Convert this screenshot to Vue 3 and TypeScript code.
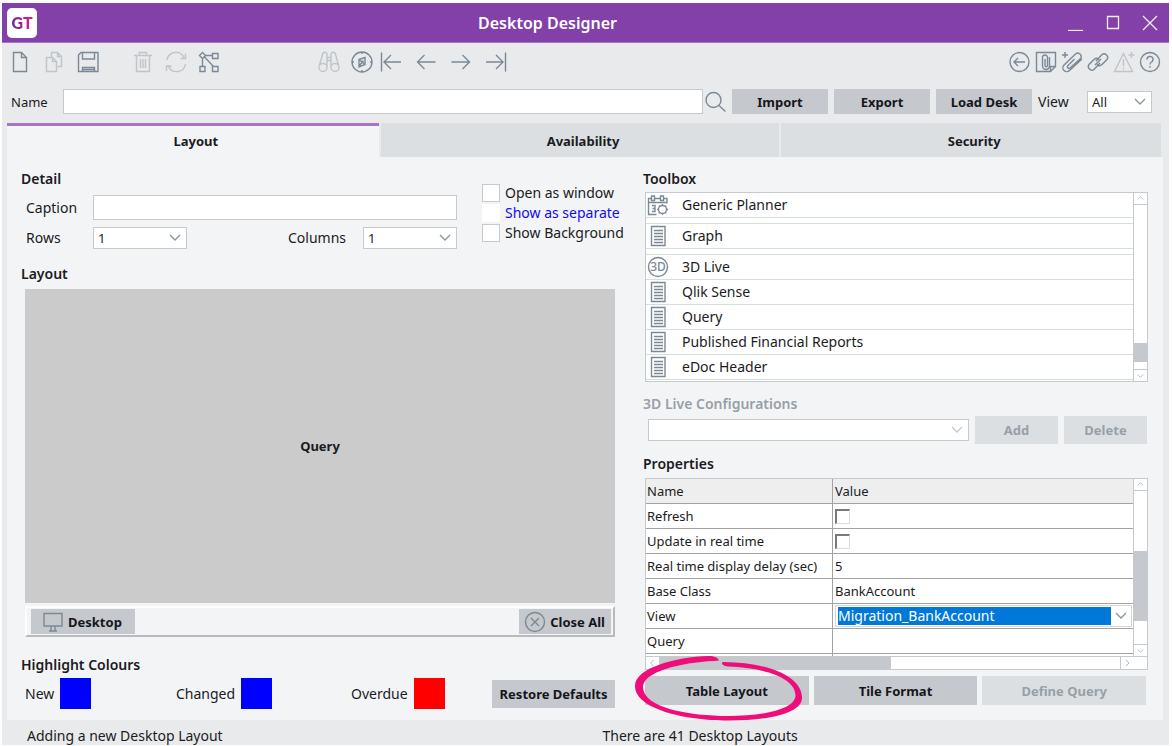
<script setup lang="ts">
import { ref } from 'vue'

interface Tool {
  label: string
  icon: string
  disabled?: boolean
}

interface ToolboxItem {
  label: string
  icon: 'planner' | 'page' | 'live'
  separated?: boolean
}

interface PropertyRow {
  name: string
  kind: 'check' | 'text' | 'select'
  value: string
}

const icons: Record<string, string> = {
  newDoc: 'M4.5 1.5h8l5 5v14h-13zM12.5 1.5v5h5',
  copy: 'M8.5 6V1.5h6l4 4v10h-4M14.5 1.5v4h4M3.5 6.5h6l4 4v10h-10zM9.5 6.5v4h4',
  save: 'M1.5 4l2.5-2.5h17v19h-19.5zM5.5 1.5v6.5h12v-6.5M5.5 20.5v-4h12v4M6 18.5h11',
  trash: 'M2 4.5h18M7.5 4.5v-3h7v3M4.5 4.5v16h13v-16M8.5 8v9M11 8v9M13.5 8v9',
  refresh: 'M2 9a9 9 0 0 1 17-2.5M20.5 2.5v5h-5M20.5 13a9 9 0 0 1-17 2.5M1.5 20v-5h5',
  tree: 'M4.5 1.5l3 3l-3 3l-3-3zM7.5 4.5h7M14.5 2.5h5.5v5h-5.5zM4.5 7.5v8M2 15.5h5v5h-5zM14.5 15.5h5.5v5h-5.5zM6.5 6l9 9.5',
  binoculars: 'M9 3.5c0-3-4-3-4.5 0L1.2 15M13 3.5c0-3 4-3 4.5 0L20.8 15M9 3v13M13 3v13M9 6.5h4M9 9.5h4M9 16.5a4 4 0 1 1-8 0a4 4 0 1 1 8 0M21 16.5a4 4 0 1 1-8 0a4 4 0 1 1 8 0',
  compass: 'M21 11a10 10 0 1 1-20 0a10 10 0 1 1 20 0M8 8.5l6-2v7l-6 2.5zM8 8.5l6 5M8.5 14.5l4-5M11 1v2M11 19v2M1 11h2M19 11h2',
  first: 'M1.5 1.5v19M21 11h-17M11 4l-7 7l7 7',
  prev: 'M20.5 11h-18M9.5 4l-7 7l7 7',
  next: 'M1.5 11h18M12.5 4l7 7l-7 7',
  last: 'M20.5 1.5v19M1 11h17M11 4l7 7l-7 7',
  back: 'M20 11a9.5 9.5 0 1 1-19 0a9.5 9.5 0 1 1 19 0M16 11h-11M9 7l-4 4l4 4',
  clipPage: 'M20.5 15.5v-14h-19v19h14zM20.5 15.5h-5v5M10 8v6.5a1.2 1.2 0 0 0 2.5 0v-8a2.5 2.5 0 0 0-5 0v8.5a3.5 3.5 0 0 0 7 0v-9',
  addClip: 'M4 1v6M1 4h6M13.5 8l-6.5 6.5a1.5 1.5 0 0 0 2 2.5L19 8a3.2 3.2 0 0 0-4.5-5L3 14a3.8 3.8 0 0 0 5.5 5.5L21 8',
  link: 'M9 10l6-6.5a3.6 3.6 0 0 1 5 5l-5 5a3.6 3.6 0 0 1-5 0M13 12l-6 6.5a3.6 3.6 0 0 1-5-5l5-5a3.6 3.6 0 0 1 5 0M8 14l6-6',
  alert: 'M10.5 2.5l9 18h-18zM10.5 8v7M10.5 16.5v2M18.5 1v6M15.5 4h6',
  help: 'M20.5 11a9.5 9.5 0 1 1-19 0a9.5 9.5 0 1 1 19 0M8 8.5a3 3 0 1 1 4.5 2.5c-1 .6-1.5 1-1.5 2.5M11 15v1.8',
  search: 'M16 9a7.5 7.5 0 1 1-15 0a7.5 7.5 0 1 1 15 0M14 14.5l6.5 6',
  planner: 'M1.5 9V4.5h3M7.5 4.5h6M16.5 4.5h3.5v5M4.5 2h3v4.5h-3zM13.5 2h3v4.5h-3zM1.5 8.5h18.5M1.5 8.5v12h8M5 11.5h3v6h-3M5.5 14.5h2.5M19.5 15.5a4 4 0 1 1-8 0a4 4 0 1 1 8 0M15.5 11.5v-1.5M15.5 19.5v1.5M11.5 15.5h-1.5M19.5 15.5h1.5M12.7 12.7l-1-1M18.3 12.7l1-1M12.7 18.3l-1 1M18.3 18.3l1 1',
  page: 'M4.5 1.5h13.5v19h-13.5zM7 5.5h9M7 8.5h9M7 11.5h9M7 14.5h9M7 17.5h9',
  desktop: 'M2 2.5h18v12.5h-18zM9 15v5M13 15v5M7 20h8',
  close: 'M20.5 11a9.5 9.5 0 1 1-19 0a9.5 9.5 0 1 1 19 0M7 7l8 8M15 7l-8 8',
}

const toolGroups: { name: string; tools: Tool[] }[] = [
  {
    name: 'file',
    tools: [
      { label: 'New', icon: 'newDoc' },
      { label: 'Copy', icon: 'copy', disabled: true },
      { label: 'Save', icon: 'save' },
    ],
  },
  {
    name: 'edit',
    tools: [
      { label: 'Delete', icon: 'trash', disabled: true },
      { label: 'Refresh', icon: 'refresh', disabled: true },
      { label: 'Structure', icon: 'tree' },
    ],
  },
  {
    name: 'find',
    tools: [
      { label: 'Find', icon: 'binoculars', disabled: true },
      { label: 'Navigate', icon: 'compass' },
    ],
  },
  {
    name: 'move',
    tools: [
      { label: 'First', icon: 'first' },
      { label: 'Previous', icon: 'prev' },
      { label: 'Next', icon: 'next' },
      { label: 'Last', icon: 'last' },
    ],
  },
  {
    name: 'extra',
    tools: [
      { label: 'Back', icon: 'back' },
      { label: 'Attachments', icon: 'clipPage' },
      { label: 'Add attachment', icon: 'addClip' },
      { label: 'Link', icon: 'link' },
      { label: 'Add alert', icon: 'alert', disabled: true },
      { label: 'Help', icon: 'help' },
    ],
  },
]

const tabs = ['Layout', 'Availability', 'Security']
const activeTab = ref('Layout')

const toolbox: ToolboxItem[] = [
  { label: 'Generic Planner', icon: 'planner' },
  { label: 'Graph', icon: 'page', separated: true },
  { label: '3D Live', icon: 'live', separated: true },
  { label: 'Qlik Sense', icon: 'page' },
  { label: 'Query', icon: 'page' },
  { label: 'Published Financial Reports', icon: 'page' },
  { label: 'eDoc Header', icon: 'page' },
]

const properties: PropertyRow[] = [
  { name: 'Refresh', kind: 'check', value: '' },
  { name: 'Update in real time', kind: 'check', value: '' },
  { name: 'Real time display delay (sec)', kind: 'text', value: '5' },
  { name: 'Base Class', kind: 'text', value: 'BankAccount' },
  { name: 'View', kind: 'select', value: 'Migration_BankAccount' },
  { name: 'Query', kind: 'text', value: '' },
]

const highlights = [
  { label: 'New', tone: 'blue' },
  { label: 'Changed', tone: 'blue' },
  { label: 'Overdue', tone: 'red' },
]
</script>

<template>
  <div class="window">
    <header class="titlebar">
      <span class="logo"><span class="logo-text">GT</span></span>
      <h1>Desktop Designer</h1>
      <div class="window-controls">
        <button type="button" aria-label="Minimise">
          <svg viewBox="0 0 16 16"><path d="M0 15.5h15" /></svg>
        </button>
        <button type="button" aria-label="Maximise">
          <svg viewBox="0 0 16 16"><path d="M2.5 1.5h11v12h-11z" /></svg>
        </button>
        <button type="button" aria-label="Close">
          <svg viewBox="0 0 16 16"><path d="M1 1l14 14M15 1l-14 14" /></svg>
        </button>
      </div>
    </header>

    <nav class="toolbar" aria-label="Tools">
      <div v-for="group in toolGroups" :key="group.name" class="tools" :class="group.name">
        <button
          v-for="tool in group.tools"
          :key="tool.label"
          type="button"
          :aria-label="tool.label"
          :disabled="tool.disabled"
        >
          <svg viewBox="0 0 22 22" class="icon"><path :d="icons[tool.icon]" /></svg>
        </button>
      </div>
    </nav>

    <div class="name-row">
      <label for="name">Name</label>
      <input id="name" type="text" class="box" />
      <button type="button" class="search" aria-label="Search">
        <svg viewBox="0 0 22 22" class="icon"><path :d="icons.search" /></svg>
      </button>
      <button type="button" class="btn">Import</button>
      <button type="button" class="btn">Export</button>
      <button type="button" class="btn">Load Desk</button>
      <label for="view-filter" class="view-label">View</label>
      <span class="combo">
        <select id="view-filter"><option>All</option></select>
        <svg viewBox="0 0 12 8" class="chevron"><path d="M1 1l5 5l5-5" /></svg>
      </span>
    </div>

    <div class="tabs" role="tablist">
      <button
        v-for="tab in tabs"
        :key="tab"
        type="button"
        role="tab"
        :aria-selected="activeTab === tab"
        :class="{ active: activeTab === tab }"
        @click="activeTab = tab"
      >
        {{ tab }}
      </button>
    </div>

    <main class="panel">
      <section class="left">
        <div class="detail">
          <div class="fields">
            <h2>Detail</h2>
            <div class="field-row">
              <label for="caption">Caption</label>
              <input id="caption" type="text" class="box" />
            </div>
            <div class="field-row second">
              <label for="rows">Rows</label>
              <span class="combo">
                <select id="rows"><option>1</option></select>
                <svg viewBox="0 0 12 8" class="chevron"><path d="M1 1l5 5l5-5" /></svg>
              </span>
              <label for="columns" class="columns-label">Columns</label>
              <span class="combo">
                <select id="columns"><option>1</option></select>
                <svg viewBox="0 0 12 8" class="chevron"><path d="M1 1l5 5l5-5" /></svg>
              </span>
            </div>
          </div>
          <div class="checks">
            <label><input type="checkbox" />Open as window</label>
            <label class="linked"><input type="checkbox" />Show as separate</label>
            <label><input type="checkbox" />Show Background</label>
          </div>
        </div>

        <h2 class="layout-title">Layout</h2>
        <div class="canvas">Query</div>
        <div class="canvas-bar">
          <button type="button" class="btn">
            <svg viewBox="0 0 22 22" class="icon"><path :d="icons.desktop" /></svg>Desktop
          </button>
          <button type="button" class="btn tight">
            <svg viewBox="0 0 22 22" class="icon"><path :d="icons.close" /></svg>Close All
          </button>
        </div>

        <h2 class="highlight-title">Highlight Colours</h2>
        <div class="highlights">
          <div v-for="item in highlights" :key="item.label" class="highlight">
            <span>{{ item.label }}</span>
            <button type="button" class="swatch" :class="item.tone" :aria-label="item.label + ' colour'"></button>
          </div>
          <button type="button" class="btn restore">Restore Defaults</button>
        </div>
      </section>

      <section class="right">
        <h2>Toolbox</h2>
        <div class="toolbox">
          <ul>
            <li v-for="item in toolbox" :key="item.label" :class="{ separated: item.separated }">
              <svg viewBox="0 0 22 22" class="icon">
                <template v-if="item.icon === 'live'">
                  <circle cx="11" cy="11" r="9.5" />
                  <text x="11" y="15" text-anchor="middle">3D</text>
                </template>
                <path v-else :d="icons[item.icon]" />
              </svg>
              {{ item.label }}
            </li>
          </ul>
          <div class="scroll-y toolbox-scroll">
            <svg viewBox="0 0 12 12" class="up"><path d="M3 7l3-3l3 3" /></svg>
            <span class="thumb"></span>
            <svg viewBox="0 0 12 12" class="down"><path d="M3 5l3 3l3-3" /></svg>
          </div>
        </div>

        <h2 class="muted config-title"><label for="config">3D Live Configurations</label></h2>
        <div class="config-row">
          <span class="combo">
            <select id="config" disabled><option></option></select>
            <svg viewBox="0 0 12 8" class="chevron"><path d="M1 1l5 5l5-5" /></svg>
          </span>
          <button type="button" class="btn" disabled>Add</button>
          <button type="button" class="btn" disabled>Delete</button>
        </div>

        <h2 class="properties-title">Properties</h2>
        <div class="properties">
          <table>
            <thead>
              <tr><th>Name</th><th>Value</th></tr>
            </thead>
            <tbody>
              <tr v-for="row in properties" :key="row.name">
                <td>{{ row.name }}</td>
                <td v-if="row.kind === 'check'">
                  <input type="checkbox" class="sunken" :aria-label="row.name" />
                </td>
                <td v-else-if="row.kind === 'select'">
                  <span class="cell-combo">
                    <select :aria-label="row.name"><option>{{ row.value }}</option></select>
                    <svg viewBox="0 0 12 8" class="chevron"><path d="M1 1l5 5l5-5" /></svg>
                  </span>
                </td>
                <td v-else>{{ row.value }}</td>
              </tr>
              <tr class="clipped"><td></td><td></td></tr>
            </tbody>
          </table>
          <div class="scroll-y properties-scroll">
            <svg viewBox="0 0 12 12" class="up"><path d="M3 7l3-3l3 3" /></svg>
            <span class="thumb"></span>
            <svg viewBox="0 0 12 12" class="down"><path d="M3 5l3 3l3-3" /></svg>
          </div>
          <div class="scroll-x">
            <svg viewBox="0 0 12 12"><path d="M7 3l-3 3l3 3" /></svg>
            <span class="thumb"></span>
            <svg viewBox="0 0 12 12" class="end"><path d="M5 3l3 3l-3 3" /></svg>
          </div>
        </div>

        <div class="actions">
          <span class="marked">
            <button type="button" class="btn">Table Layout</button>
            <svg viewBox="634 654 170 68" class="marker" aria-hidden="true">
              <path
                d="M719 660.5C718 657.5 714 656 709 656C675 657 635 668 635 686C635 709 685 720.5 728 720.5C770 720.5 803 713 802 697C801 675 765 662.5 724 662C720 662 722 666 728 666.5C762 667.5 795 677 795.5 695C796 709 765 716 728 716C690 716 643 708 643 687C643 672 680 662.5 714 661Z"
              />
            </svg>
          </span>
          <button type="button" class="btn">Tile Format</button>
          <button type="button" class="btn" disabled>Define Query</button>
        </div>
      </section>
    </main>

    <footer class="status">
      <span>Adding a new Desktop Layout</span>
      <span>There are 41 Desktop Layouts</span>
    </footer>
  </div>
</template>

<style>
body {
  background: #fdfdfe;
}
</style>

<style scoped>
.window {
  margin: 3px 3px 1px 2px;
  background: #e8eaec;
  color: #1b1b22;
  font: 14px/20px "Noto Sans", "Open Sans", sans-serif;
}

.window * {
  box-sizing: border-box;
}

button,
input,
select {
  margin: 0;
  padding: 0;
  border: 0;
  border-radius: 0;
  background: none;
  color: inherit;
  font: inherit;
}

h1,
h2 {
  margin: 0;
  font-size: 14px;
  font-weight: 600;
  line-height: 20px;
}

svg {
  display: block;
  flex: none;
  fill: none;
}

.icon {
  width: 22px;
  height: 22px;
  stroke: #7c8995;
  stroke-width: 1.4;
}

.icon text {
  fill: #7c8995;
  stroke: none;
  font: 500 12px "Noto Sans", sans-serif;
}

button:disabled .icon {
  stroke: #c0c5ca;
}

.titlebar {
  display: grid;
  grid-template-columns: 471fr auto 541fr;
  align-items: center;
  height: 40px;
  padding: 0 11px 0 5px;
  border-bottom: 1px solid #a874c4;
  background: #8340a9;
  color: #fff;
}

.titlebar h1 {
  font-size: 16px;
}

.logo {
  display: grid;
  place-items: center;
  width: 30px;
  height: 30px;
  border-radius: 5px;
  background: #fff;
}

.logo-text {
  background: linear-gradient(90deg, #6420a8, #e8207c);
  background-clip: text;
  color: transparent;
  font: 900 16px/20px Lato, sans-serif;
}

.window-controls {
  display: flex;
  justify-content: flex-end;
  gap: 21px;
}

.window-controls svg {
  width: 16px;
  height: 16px;
  stroke: #f4ecf8;
  stroke-width: 1.3;
}

.toolbar {
  display: flex;
  height: 46px;
  padding: 8px 8px 0 7px;
}

.tools {
  display: flex;
}

.tools button {
  height: 22px;
}

.file {
  gap: 12px;
}

.edit {
  gap: 11px;
  margin-left: 33px;
}

.find {
  gap: 11px;
  margin-left: 98px;
}

.move {
  gap: 13px;
  margin-left: 7px;
}

.extra {
  gap: 4px;
  margin-left: auto;
}

.name-row {
  display: flex;
  align-items: center;
  height: 25px;
  padding: 0 17px 0 9px;
}

.name-row > label {
  flex: none;
  width: 52px;
  font-size: 13px;
}

.name-row .box {
  flex: 1;
  min-width: 0;
}

.name-row .search {
  margin: 0 5px 0 2px;
}

.name-row .btn {
  width: 96px;
  height: 25px;
  margin-right: 6px;
}

.name-row > .view-label {
  width: 49px;
  font-size: 14px;
}

.name-row .combo {
  width: 65px;
}

.box,
.combo {
  height: 25px;
  border: 1px solid #c6cacf;
  background: #fff;
}

.box {
  padding: 0 6px;
}

.combo {
  display: grid;
  grid-template: 100% / 100%;
  align-items: center;
  height: 22px;
}

.combo > *,
.combo select {
  grid-area: 1 / 1;
}

select {
  width: 100%;
  height: 20px;
  appearance: none;
  line-height: 20px;
}

.combo select {
  padding: 0 24px 0 4px;
  font-size: 13px;
}

.chevron {
  width: 12px;
  height: 8px;
  stroke: #8b959f;
  stroke-width: 1.4;
  pointer-events: none;
}

.combo .chevron {
  justify-self: end;
  margin-right: 5px;
}

.btn {
  display: inline-flex;
  align-items: center;
  justify-content: center;
  background: #c5c8cc;
  color: #15161c;
  font-size: 13px;
  font-weight: 700;
}

.btn:disabled {
  background: #dbdfe2;
  color: #989fa6;
}

.tabs {
  display: grid;
  grid-template-columns: 372fr 399fr 380fr;
  gap: 2px;
  height: 34px;
  margin: 9px 8px 0 5px;
}

.tabs button {
  padding: 0 0 2px 6px;
  border-top: 3px solid #dbdfe2;
  background: #dbdfe2;
  font-size: 13px;
  font-weight: 700;
}

.tabs button.active {
  border-top-color: #a874c4;
  background: #f3f4f6;
}

.panel {
  display: grid;
  grid-template-columns: 594fr 505fr;
  gap: 28px;
  margin: 0 6px 0 5px;
  padding: 12px 15px 11px 14px;
  background: #f3f4f6;
}

.detail {
  display: flex;
  gap: 25px;
}

.fields {
  flex: 1;
}

.field-row {
  display: flex;
  align-items: center;
  margin-top: 6px;
  padding-left: 5px;
}

.field-row label {
  width: 67px;
}

.field-row .box {
  flex: 1;
}

.field-row.second {
  margin-top: 7px;
}

.field-row .combo {
  width: 94px;
}

.field-row .columns-label {
  width: 75px;
  margin-left: auto;
}

.checks {
  display: flex;
  flex-direction: column;
  margin-top: 14px;
  width: 133px;
  white-space: nowrap;
}

.checks label {
  display: flex;
  align-items: center;
  gap: 5px;
  height: 20px;
}

.checks input {
  flex: none;
  width: 18px;
  height: 18px;
  border: 1px solid #c6cacf;
  background: #fff;
  appearance: none;
}

.checks .linked {
  color: #1408f5;
}

.checks .linked input {
  border-color: #fff;
}

.layout-title {
  margin-top: 15px;
}

.canvas {
  display: grid;
  place-items: center;
  height: 314px;
  margin: 5px 0 0 4px;
  background: #cbcbcb;
  font-size: 13px;
  font-weight: 700;
}

.canvas-bar {
  display: flex;
  justify-content: space-between;
  margin: 3px 0 0 4px;
  padding: 1px 2px 1px 4px;
  border: 2px solid #fdfdfe;
  border-right-color: #b9babc;
  border-bottom-color: #b9babc;
}

.canvas-bar .btn {
  gap: 4px;
  height: 25px;
  padding: 0 13px 0 11px;
}

.canvas-bar .tight {
  padding: 0 6px 0 5px;
}

.highlight-title {
  margin-top: 18px;
}

.highlights {
  display: grid;
  grid-template-columns: 151fr 175fr 141fr 123px;
  align-items: center;
  margin-top: 3px;
  padding-left: 4px;
}

.highlight {
  display: flex;
  align-items: center;
  gap: 6px;
}

.swatch {
  width: 31px;
  height: 31px;
}

.swatch.blue {
  background: #0000fe;
}

.swatch.red {
  background: #fe0000;
}

.restore {
  height: 28px;
}

.toolbox {
  display: grid;
  grid-template-columns: 1fr 14px;
  height: 190px;
  margin: 3px 0 0 2px;
  border: 1px solid #c6cacf;
  background: #fff;
}

.toolbox ul {
  margin: 0;
  padding: 0;
  list-style: none;
}

.toolbox li {
  display: flex;
  align-items: center;
  gap: 13px;
  height: 25px;
  padding-left: 1px;
  border-bottom: 1px solid #d5ded8;
}

.toolbox li.separated {
  height: 26px;
  margin-top: 5px;
  border-top: 1px solid #d5ded8;
}

.scroll-y {
  display: flex;
  flex-direction: column;
  border-left: 1px solid #c6cacf;
  background: #fff;
}

.scroll-y svg,
.scroll-x svg {
  width: 13px;
  height: 12px;
  stroke: #b4bac0;
}

.thumb {
  background: #c5c8cc;
}

.up {
  border-bottom: 1px solid #c6cacf;
}

.down {
  border-top: 1px solid #c6cacf;
}

.toolbox-scroll .thumb {
  height: 19px;
  margin: auto 0 7px;
}

.muted {
  color: #989fa6;
}

.config-title {
  margin-top: 12px;
}

.config-row {
  display: flex;
  align-items: center;
  gap: 6px;
  margin-top: 2px;
  padding: 0 1px 0 5px;
}

.config-row .combo {
  flex: 1;
}

.config-row .chevron {
  stroke: #c6cacf;
}

.config-row .btn {
  width: 83px;
  height: 28px;
}

.properties-title {
  margin-top: 10px;
}

.properties {
  display: grid;
  grid-template-columns: 1fr 14px;
  margin: 4px 0 0 2px;
  border: 1px solid #c6cacf;
  background: #fff;
}

table {
  width: 100%;
  border-spacing: 0;
  table-layout: fixed;
  font-size: 13px;
}

th,
td {
  height: 25px;
  padding: 0 1px;
  border-right: 1px solid #a2a2a2;
  border-bottom: 1px solid #a2a2a2;
  font-weight: 400;
  text-align: left;
  white-space: nowrap;
}

th {
  background: #eeeeee;
}

th:first-child {
  width: 187px;
}

th:last-child,
td:last-child {
  padding-left: 2px;
  border-right: 0;
}

.clipped td {
  height: 2px;
  border-bottom: 0;
}

.sunken {
  display: block;
  width: 15px;
  height: 15px;
  border: 2px solid #7a7a7a;
  border-right: 1px solid #dcdcdc;
  border-bottom: 1px solid #dcdcdc;
  appearance: none;
}

.cell-combo {
  display: flex;
  align-items: center;
  gap: 4px;
  height: 22px;
  padding: 1px 4px 1px 2px;
  border: 1px solid #d4d7da;
}

.cell-combo select {
  height: 18px;
  background: #0078d7;
  color: #fff;
  font-size: 14px;
  line-height: 18px;
}

.properties-scroll .thumb {
  height: 70px;
  margin: 60px 0 auto;
}

.scroll-x {
  grid-column: 1 / -1;
  display: flex;
  height: 13px;
  border-top: 1px solid #c6cacf;
}

.scroll-x .thumb {
  width: 232px;
}

.scroll-x .end {
  margin: 0 14px 0 auto;
  border-left: 1px solid #c6cacf;
}

.actions {
  display: grid;
  grid-template-columns: repeat(3, 1fr);
  gap: 5px;
  margin: 6px 2px 0;
}

.actions .btn {
  width: 100%;
  height: 29px;
}

.marked {
  position: relative;
}

.marker {
  position: absolute;
  top: -22px;
  left: -11px;
  width: 170px;
  height: 68px;
  pointer-events: none;
}

.marker path {
  fill: #ee0d79;
}

.status {
  display: grid;
  grid-template-columns: 576fr 567fr;
  height: 25px;
  padding: 7px 0 0 25px;
  line-height: 18px;
}
</style>
